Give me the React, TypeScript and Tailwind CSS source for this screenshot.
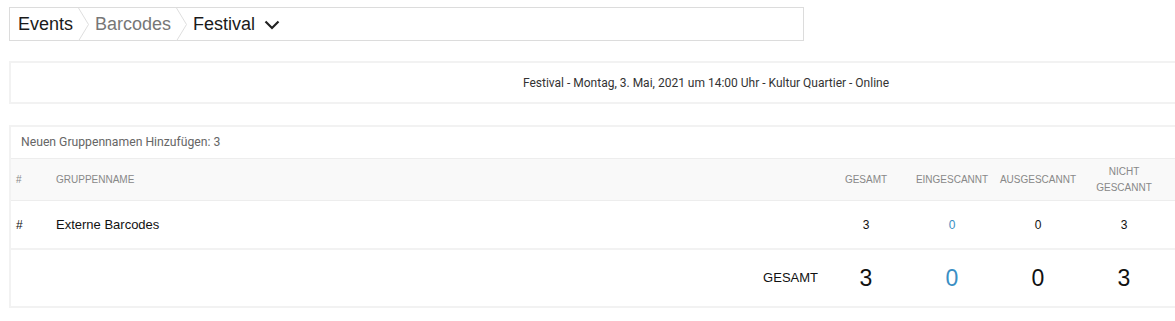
import React from 'react';

const arial = { fontFamily: '"Liberation Sans", Arial, sans-serif' };

function Crumb({ label, muted }: { label: string; muted?: boolean }) {
  return (
    <span className={muted ? 'text-[#777]' : 'text-[#1a1a1a]'}>{label}</span>
  );
}

function Sep() {
  return (
    <svg width="12" height="33" viewBox="0 0 12 33" className="shrink-0 mx-[5px]">
      <polyline points="0.5,0 10.5,16.5 0.5,33" fill="none" stroke="#dedede" strokeWidth="1" />
    </svg>
  );
}

const stats = [
  { key: 'gesamt', label: 'GESAMT', row: 3, total: 3 },
  { key: 'ein', label: 'EINGESCANNT', row: 0, total: 0, blue: true },
  { key: 'aus', label: 'AUSGESCANNT', row: 0, total: 0 },
  { key: 'nicht', label: 'NICHT GESCANNT', row: 3, total: 3 },
];

const cols = 'grid grid-cols-[40px_772px_86px_86px_86px_86px_234px]';

export default function App() {
  return (
    <div className="w-[1175px] h-[321px] overflow-hidden bg-white" style={arial}>
      <div className="w-[1412px] pl-[9px] pt-[7px]">
        {/* Breadcrumb */}
        <div className="w-[795px] h-[34px] border border-[#dcdcdc] flex items-center pl-[8px] text-[18px] leading-none">
          <Crumb label="Events" />
          <Sep />
          <Crumb label="Barcodes" muted />
          <Sep />
          <Crumb label="Festival" />
          <svg width="16" height="10" viewBox="0 0 16 10" className="ml-[9px] mt-[2px]">
            <polyline points="1.5,1.5 8,8 14.5,1.5" fill="none" stroke="#222" strokeWidth="2.2" />
          </svg>
        </div>

        {/* Event info */}
        <div
          className="w-[1394px] h-[43px] mt-[20px] border-2 border-[#f2f2f2] flex items-center justify-center text-[12px] text-[#333]"
          style={{ fontFamily: 'Roboto, "Liberation Sans", sans-serif' }}
        >
          Festival - Montag, 3. Mai, 2021 um 14:00 Uhr - Kultur Quartier - Online
        </div>

        {/* Groups table */}
        <div className="w-[1394px] mt-[21px] border-2 border-[#f2f2f2]">
          <div
            className="h-[31px] flex items-center pl-[10px] text-[12.2px] text-[#666]"
            style={{ fontFamily: 'Roboto, "Liberation Sans", sans-serif' }}
          >
            Neuen Gruppennamen Hinzufügen: 3
          </div>

          <div className={`${cols} h-[43px] bg-[#f9f9f9] border-y border-[#ededed] text-[10px] text-[#888] leading-[16px] items-center`}>
            <div className="pl-[5px]">#</div>
            <div className="pl-[5px]">GRUPPENNAME</div>
            {stats.map((s) => (
              <div key={s.key} className="text-center px-[2px]">
                {s.key === 'nicht' ? (
                  <>
                    NICHT
                    <br />
                    GESCANNT
                  </>
                ) : (
                  s.label
                )}
              </div>
            ))}
            <div />
          </div>

          <div className={`${cols} h-[49px] items-center text-[12px] text-[#111] border-b-2 border-[#f2f2f2]`}>
            <div className="pl-[5px]">#</div>
            <div className="pl-[5px] text-[13px]">Externe Barcodes</div>
            {stats.map((s) => (
              <div key={s.key} className={`text-center ${s.blue ? 'text-[#3a8fc4]' : ''}`}>
                {s.row}
              </div>
            ))}
            <div />
          </div>

          <div className={`${cols} h-[56px] items-center text-[#111]`}>
            <div />
            <div className="text-right pr-[5px] text-[13px]">GESAMT</div>
            {stats.map((s) => (
              <div key={s.key} className={`text-center text-[23px] ${s.blue ? 'text-[#3a8fc4]' : ''}`}>
                {s.total}
              </div>
            ))}
            <div />
          </div>
        </div>
      </div>
    </div>
  );
}
